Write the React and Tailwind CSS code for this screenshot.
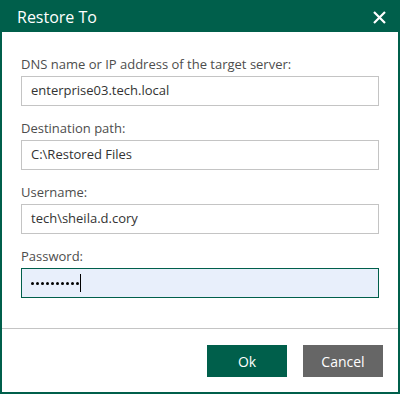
import React from "react";

function Field({ label, value, active, password }) {
  return (
    <div className="flex flex-col">
      <div className="h-[16px] leading-[16px] text-[13px] text-[#4d4d4d]">{label}</div>
      <div
        className={
          "mt-[4px] h-[30px] w-[358px] flex items-center pl-[9px] text-[13px] text-[#333333] " +
          (active ? "border border-[#005f4b] bg-[#e8effb]" : "border border-[#c4c4c4] bg-white")
        }
      >
        {password ? (
          <span className="flex items-center">
            <span className="flex items-center gap-[2.5px] mt-[1px]">
              {[0, 1, 2, 3, 4, 5, 6, 7, 8, 9].map((i) => (
                <span key={i} className="w-[2.5px] h-[2.5px] rounded-full bg-black" />
              ))}
            </span>
            <span className="ml-[1px] w-[1px] h-[18px] bg-black" />
          </span>
        ) : (
          value
        )}
      </div>
    </div>
  );
}

export default function App() {
  return (
    <div
      className="w-[400px] h-[394px] border-2 border-[#005f4b] flex flex-col bg-white"
      style={{ fontFamily: '"Open Sans", "Noto Sans", sans-serif' }}
    >
      <div className="h-[30px] bg-[#005f4b] flex items-center justify-between pl-[15px] pr-[12px]">
        <span className="text-white text-[16px] leading-none">Restore To</span>
        <svg width="13" height="13" viewBox="0 0 13 13">
          <path d="M1 1 L12 12 M12 1 L1 12" stroke="white" strokeWidth="2.2" />
        </svg>
      </div>
      <div className="h-[296px] pt-[24px] pl-[19px] flex flex-col gap-[14px]">
        <Field label="DNS name or IP address of the target server:" value="enterprise03.tech.local" />
        <Field label="Destination path:" value="C:\Restored Files" />
        <Field label="Username:" value="tech\sheila.d.cory" />
        <Field label="Password:" active password />
      </div>
      <div className="border-t border-[#c4c4c4] flex-1 flex justify-end items-start pt-[16px] pr-[15px] gap-[16px]">
        <button className="w-[80px] h-[32px] bg-[#005f4b] text-white text-[14px]">Ok</button>
        <button className="w-[80px] h-[32px] bg-[#666666] text-white text-[14px]">Cancel</button>
      </div>
    </div>
  );
}
